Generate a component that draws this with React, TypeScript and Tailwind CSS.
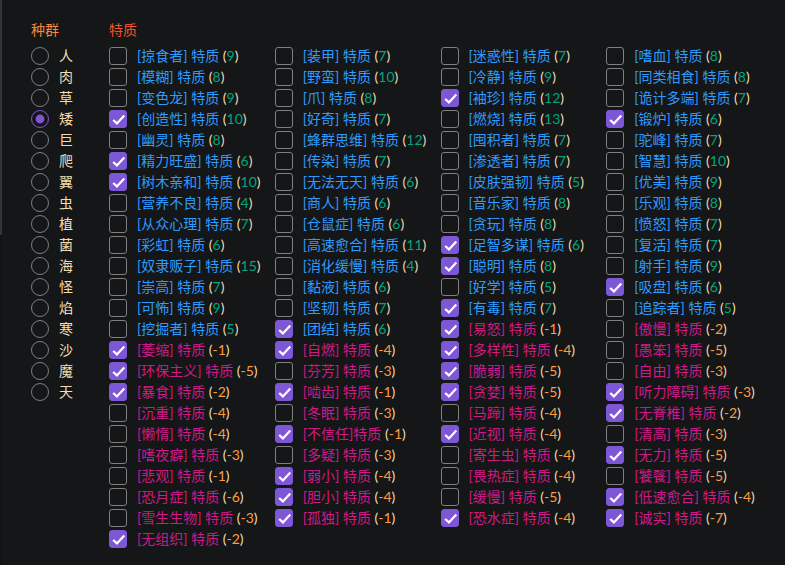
const species = '人肉草矮巨爬翼虫植菌海怪焰寒沙魔天'.split('');

type Trait = [name: string, cost: number, checked?: 1];

const traits: Trait[] = [
  ['掠食者', 9], ['装甲', 7], ['迷惑性', 7], ['嗜血', 8],
  ['模糊', 8], ['野蛮', 10], ['冷静', 9], ['同类相食', 8],
  ['变色龙', 9], ['爪', 8], ['袖珍', 12, 1], ['诡计多端', 7],
  ['创造性', 10, 1], ['好奇', 7], ['燃烧', 13], ['锻炉', 6, 1],
  ['幽灵', 8], ['蜂群思维', 12], ['囤积者', 7], ['驼峰', 7],
  ['精力旺盛', 6, 1], ['传染', 7], ['渗透者', 7], ['智慧', 10],
  ['树木亲和', 10, 1], ['无法无天', 6], ['皮肤强韧', 5], ['优美', 9],
  ['营养不良', 4], ['商人', 6], ['音乐家', 8], ['乐观', 8],
  ['从众心理', 7], ['仓鼠症', 6], ['贪玩', 8], ['愤怒', 7],
  ['彩虹', 6], ['高速愈合', 11], ['足智多谋', 6, 1], ['复活', 7],
  ['奴隶贩子', 15], ['消化缓慢', 4], ['聪明', 8, 1], ['射手', 9],
  ['崇高', 7], ['黏液', 6], ['好学', 5], ['吸盘', 6, 1],
  ['可怖', 9], ['坚韧', 7], ['有毒', 7, 1], ['追踪者', 5],
  ['挖掘者', 5], ['团结', 6, 1], ['易怒', -1, 1], ['傲慢', -2],
  ['萎缩', -1, 1], ['自燃', -4, 1], ['多样性', -4, 1], ['愚笨', -5],
  ['环保主义', -5, 1], ['芬芳', -3], ['脆弱', -5, 1], ['自由', -3],
  ['暴食', -2, 1], ['啮齿', -1, 1], ['贪婪', -5, 1], ['听力障碍', -3, 1],
  ['沉重', -4], ['冬眠', -3], ['马蹄', -4], ['无脊椎', -2, 1],
  ['懒惰', -4], ['不信任', -1, 1], ['近视', -4, 1], ['清高', -3],
  ['嗜夜癖', -3], ['多疑', -3], ['寄生虫', -4], ['无力', -5, 1],
  ['悲观', -1], ['弱小', -4, 1], ['畏热症', -4], ['饕餮', -5],
  ['恐月症', -6], ['胆小', -4, 1], ['缓慢', -5], ['低速愈合', -4, 1],
  ['雪生生物', -3], ['孤独', -1, 1], ['恐水症', -4, 1], ['诚实', -7, 1],
  ['无组织', -2, 1],
];

function SpeciesOption({ name }: { name: string }) {
  return (
    <label className="flex h-[18px] items-center gap-2.5">
      <span className="grid size-[18px] shrink-0 place-items-center">
        <input
          type="radio"
          name="species"
          defaultChecked={name === '矮'}
          className="peer col-start-1 row-start-1 size-[18px] appearance-none rounded-full border border-[#808080] checked:border-[#7d57d6]"
        />
        <svg
          viewBox="0 0 18 18"
          className="pointer-events-none col-start-1 row-start-1 hidden size-[18px] peer-checked:block"
        >
          <circle cx="9" cy="9" r="4.4" fill="#7d57d6" />
        </svg>
      </span>
      <span>{name}</span>
    </label>
  );
}

function TraitOption({ trait: [name, cost, checked] }: { trait: Trait }) {
  const positive = cost > 0;
  return (
    <label className="flex h-[18px] items-center gap-2.5 whitespace-nowrap">
      <span className="grid size-[18px] shrink-0 place-items-center">
        <input
          type="checkbox"
          defaultChecked={checked === 1}
          className="peer col-start-1 row-start-1 size-[18px] appearance-none rounded-[3px] border border-[#808080] checked:border-[#7d57d6] checked:bg-[#7d57d6]"
        />
        <svg
          viewBox="0 0 18 18"
          className="pointer-events-none col-start-1 row-start-1 hidden size-[18px] peer-checked:block"
        >
          <path d="M4.2 10 L7.9 13.4 L15.3 5.4" fill="none" stroke="#fff" strokeWidth="2.2" />
        </svg>
      </span>
      <span>
        <span className={positive ? 'text-[#2e9bff]' : 'text-[#cc1a8a]'}>
          [{name}]{name === '不信任' ? '' : ' '}特质
        </span>{' '}
        (<span className={positive ? 'text-[#00a67d]' : 'text-[#ff9b3d]'}>{cost}</span>)
      </span>
    </label>
  );
}

export default function App() {
  return (
    <div className="flex min-h-screen bg-[#141617] font-[Lato,'Noto_Sans_CJK_SC',sans-serif] text-sm leading-[18px] text-[#f2deb0]">
      <div className="w-0.5 shrink-0 bg-[#101213]">
        <div className="h-[235px] bg-[#2f3638]" />
      </div>
      <main className="flex flex-1 pt-[21px] pr-[13px] pb-4 pl-[29px]">
        <fieldset className="w-[78px] shrink-0">
          <legend className="mb-2 text-[#f58a3c]">种群</legend>
          <div className="flex flex-col gap-[3px]">
            {species.map((name) => (
              <SpeciesOption key={name} name={name} />
            ))}
          </div>
        </fieldset>
        <fieldset className="min-w-0 flex-1">
          <legend className="mb-2 text-[#f0552d]">特质</legend>
          <div className="grid grid-cols-4 gap-y-[3px]">
            {traits.map((trait) => (
              <TraitOption key={trait[0]} trait={trait} />
            ))}
          </div>
        </fieldset>
      </main>
    </div>
  );
}
